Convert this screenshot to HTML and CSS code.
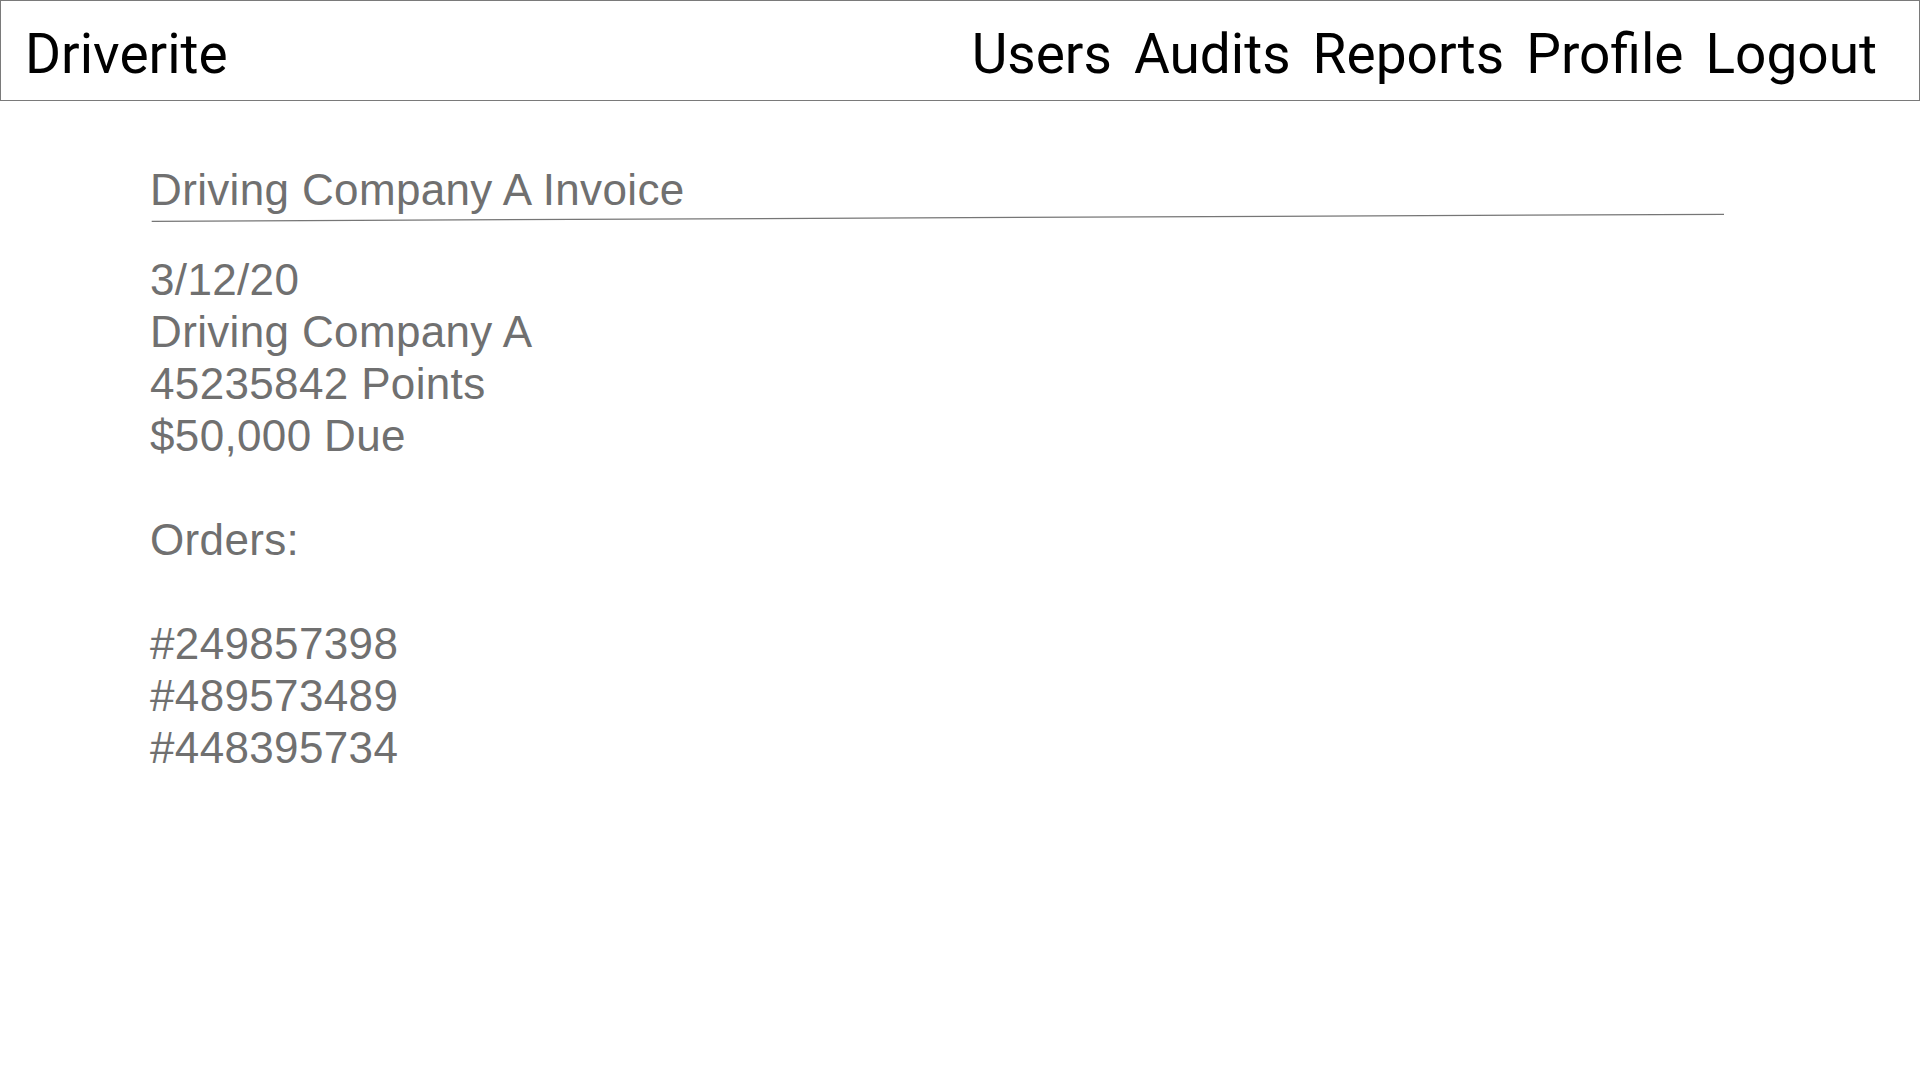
FILE: index.html
```html
<!DOCTYPE html>
<html lang="en">
<head>
<meta charset="utf-8">
<title>Driverite</title>
<link rel="stylesheet" href="styles.css">
</head>
<body>
<header class="topbar">
  <div class="brand">Driverite</div>
  <nav class="nav">
    <a class="nav-link" href="#">Users</a>
    <a class="nav-link" href="#">Audits</a>
    <a class="nav-link" href="#">Reports</a>
    <a class="nav-link" href="#">Profile</a>
    <a class="nav-link" href="#">Logout</a>
  </nav>
</header>
<main class="invoice">
  <h1 class="invoice-title">Driving Company A Invoice</h1>
  <svg class="rule" width="1580" height="10" viewBox="0 0 1580 10">
    <line x1="1.7" y1="8.3" x2="1574" y2="1.3" stroke="#767676" stroke-width="1.3"/>
  </svg>
  <div class="details">
    <div class="line">3/12/20</div>
    <div class="line">Driving Company A</div>
    <div class="line">45235842 Points</div>
    <div class="line">$50,000 Due</div>
    <div class="line blank"></div>
    <div class="line">Orders:</div>
    <div class="line blank"></div>
    <div class="line">#249857398</div>
    <div class="line">#489573489</div>
    <div class="line">#448395734</div>
  </div>
</main>
</body>
</html>
```
FILE: styles.css
```css
html, body {
  margin: 0;
  padding: 0;
  background: #ffffff;
}

body {
  font-family: "Liberation Sans", Arial, sans-serif;
}

.topbar {
  box-sizing: border-box;
  width: 1920px;
  height: 101px;
  border: 1px solid #7a7a7a;
  display: flex;
  align-items: center;
  justify-content: space-between;
  padding: 6px 42px 0 24px;
  font-family: Roboto, "Liberation Sans", sans-serif;
  font-size: 55px;
  color: #000000;
}

.brand {
  line-height: normal;
}

.nav {
  display: flex;
  gap: 22px;
}

.nav-link {
  color: #000000;
  text-decoration: none;
}

.invoice {
  padding-left: 150px;
  color: #707070;
  font-size: 44px;
  line-height: 52px;
  letter-spacing: 0.35px;
}

.invoice-title {
  margin: 63px 0 0 0;
  font-size: 44px;
  font-weight: normal;
  line-height: 52px;
}

.rule {
  display: block;
  margin-top: -3px;
}

.details {
  margin-top: 31px;
}

.line {
  height: 52px;
  white-space: nowrap;
}
```
